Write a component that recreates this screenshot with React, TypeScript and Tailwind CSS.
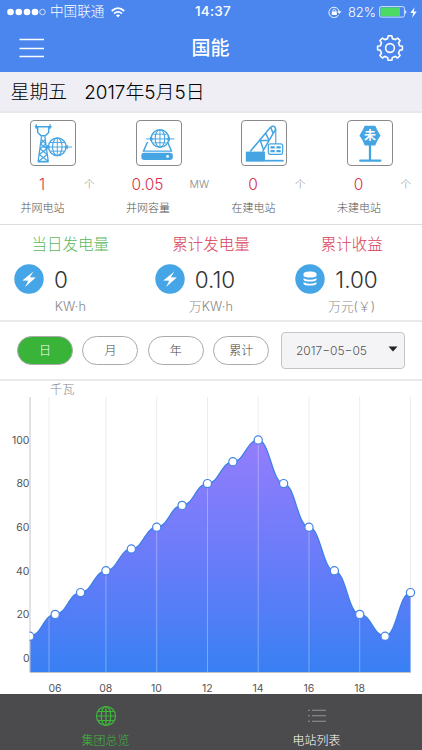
import React from 'react';

const TowerIcon = () => (
  <svg viewBox="0 0 46 46" className="w-full h-full" fill="none" stroke="#45a5e3" strokeWidth="1.5">
    <path d="M4 6H21.5M5.5 3.5V8M20 3.5V8M7 6V12L10.5 15.5H15L18.5 12V6" />
    <path d="M11 16L7.5 42M14.5 16L18 42M10.5 19L15.5 24L9.5 29L17 35L8 42M15 19L10 24L16.5 29L8.5 35L18 42" strokeWidth="1.3" />
    <path d="M7 42.5H18.5" strokeWidth="1.8" />
    <circle cx="27.5" cy="27" r="9.2" />
    <ellipse cx="27.5" cy="27" rx="5" ry="9.2" strokeWidth="1.2" />
    <path d="M20 22.5H35M20 31.5H35M12 27.2H43M27.5 18V36" strokeWidth="1" />
    <path d="M20.5 27.2L16.5 24.8V29.6ZM34.5 27.2L38.5 24.8V29.6Z" fill="#45a5e3" stroke="none" />
  </svg>
);

const CapacityIcon = () => (
  <svg viewBox="0 0 46 46" className="w-full h-full" fill="none" stroke="#45a5e3" strokeWidth="1.5">
    <circle cx="24" cy="18.3" r="9.2" />
    <ellipse cx="24" cy="18.3" rx="5" ry="9.2" strokeWidth="1.2" />
    <path d="M17 13.8H31M17 22.8H31M24 9V27.5M9.5 18.7H39" strokeWidth="1" />
    <path d="M17.5 18.7L13.5 16.2V21.2ZM30.5 18.7L34.5 16.2V21.2Z" fill="#45a5e3" stroke="none" />
    <path d="M11 22L6.8 31.5H36L32 22" />
    <rect x="4.5" y="33.2" width="33" height="7.6" rx="3.2" fill="#45a5e3" stroke="none" />
    <circle cx="32" cy="37" r="1.4" fill="white" stroke="none" />
  </svg>
);

const CraneIcon = () => (
  <svg viewBox="0 0 46 46" className="w-full h-full" fill="none" stroke="#45a5e3" strokeWidth="1.6">
    <path d="M8.5 32L29.5 6.8Q34 3.5 35.2 8.5L21.5 32M18 20.5H28.5M19 20L22.5 30M24.5 12.5L28.5 20.5M30 6.5L32.5 13" />
    <path d="M35.3 8V24" strokeWidth="1.2" />
    <rect x="4" y="32" width="20" height="10.5" fill="#45a5e3" stroke="none" />
    <path d="M24 41.5H43.5" strokeWidth="1.8" />
    <rect x="27.5" y="23.8" width="15" height="11" rx="2" strokeWidth="1.3" />
    <path d="M29.8 27.5H34.2M36 27.5H40.5M29.8 31.4H34.2M36 31.4H40.5" strokeWidth="2.4" />
  </svg>
);

const SignIcon = () => (
  <svg viewBox="0 0 46 46" className="w-full h-full">
    <path d="M17.5 5H28.5Q30 9 34 15.2Q30 21 28.5 25.5H17.5Q16 21 12 15.2Q16 9 17.5 5Z" fill="#45a5e3" />
    <path d="M23 25V41M12.8 41.5H33.8" stroke="#45a5e3" strokeWidth="2.4" strokeLinecap="round" />
    <text x="23" y="20" textAnchor="middle" fontSize="12.5" fontWeight="700" fill="white">未</text>
  </svg>
);

const BoltIcon = () => (
  <svg viewBox="0 0 30 30" className="w-[30px] h-[30px]">
    <circle cx="15" cy="15" r="14.7" fill="#45a5e6" />
    <path d="M19.5 7.5L8.3 16.4L14.2 16.8L11 23L21.8 13.6L15.8 13.2Z" fill="white" />
  </svg>
);

const CoinsIcon = () => (
  <svg viewBox="0 0 30 30" className="w-[30px] h-[30px]">
    <circle cx="15" cy="15" r="14.7" fill="#45a5e6" />
    <path d="M8.5 10C8.5 6.8 21.5 6.8 21.5 10V11.5C21.5 14.2 8.5 14.2 8.5 11.5Z" fill="white" />
    <path d="M8.5 14.2Q15 17.2 21.5 14.2V15.4C21.5 18.3 8.5 18.3 8.5 15.4Z" fill="white" />
    <path d="M8.5 18.2Q15 21.2 21.5 18.2V19.4C21.5 22.3 8.5 22.3 8.5 19.4Z" fill="white" />
  </svg>
);

const stations = [
  { icon: <TowerIcon />, value: '1', unit: '个', label: '并网电站' },
  { icon: <CapacityIcon />, value: '0.05', unit: 'MW', label: '并网容量' },
  { icon: <CraneIcon />, value: '0', unit: '个', label: '在建电站' },
  { icon: <SignIcon />, value: '0', unit: '个', label: '未建电站' }
];

const totals = [
  { icon: <BoltIcon />, title: '当日发电量', color: 'text-[#5cb85c]', value: '0', unit: 'KW·h' },
  { icon: <BoltIcon />, title: '累计发电量', color: 'text-[#d9405a]', value: '0.10', unit: '万KW·h' },
  { icon: <CoinsIcon />, title: '累计收益', color: 'text-[#d9405a]', value: '1.00', unit: '万元(￥)' }
];

const ranges = ['日', '月', '年', '累计'];

// hourly power from 05:00 to 20:00
const power = [10, 20, 30, 40, 50, 60, 70, 80, 90, 100, 80, 60, 40, 20, 10, 30];
const points = power.map((value, i) => ({ x: 29.8 + i * 25.38, y: 277 - value * 2.18 }));
const curve = points
  .map((p, i) => {
    if (i === 0) return `M${p.x} ${p.y}`;
    const prev = points[i - 1];
    return `C${prev.x + 11.5} ${prev.y} ${p.x - 11.5} ${p.y} ${p.x} ${p.y}`;
  })
  .join('');
const gridLines = [49, 105.9, 156.7, 207.5, 258.2, 309, 359.7, 410.5];

const PowerChart = () => (
  <svg viewBox="0 0 422 313" className="block w-full h-[313px]">
    <defs>
      <linearGradient id="area" x1="0" y1="59" x2="0" y2="291" gradientUnits="userSpaceOnUse">
        <stop offset="0" stopColor="#947dfc" />
        <stop offset="0.55" stopColor="#667cf9" />
        <stop offset="1" stopColor="#3880f3" />
      </linearGradient>
      <clipPath id="plot">
        <rect x="29.5" y="0" width="392" height="313" />
      </clipPath>
      <clipPath id="areaClip">
        <path d={`${curve}V291H29.8Z`} />
      </clipPath>
    </defs>
    <text x="50" y="12.5" fontSize="12.3" fontWeight="300" fill="#888">千瓦</text>
    {gridLines.map((x) => (
      <path key={x} d={`M${x} 16V291`} stroke="#ececec" />
    ))}
    <path d={`${curve}V291H29.8Z`} fill="url(#area)" />
    {gridLines.slice(0, 7).map((x) => (
      <path key={x} d={`M${x} 60V291`} stroke="white" strokeOpacity="0.32" clipPath="url(#areaClip)" />
    ))}
    <path d={curve} fill="none" stroke="#3f7fe6" strokeWidth="1.3" />
    <path d="M30 16V291.5H411" fill="none" stroke="#c4c4c8" />
    <g clipPath="url(#plot)">
      {points.map((p) => (
        <circle key={p.x} cx={p.x} cy={p.y} r="4.1" fill="white" stroke="#4584e6" strokeWidth="1.2" />
      ))}
    </g>
    <g fontSize="10.5" fill="#555">
      {[0, 20, 40, 60, 80, 100].map((v) => (
        <text key={v} x="29.5" y={280.7 - v * 2.18} textAnchor="end">{v}</text>
      ))}
      {['06', '08', '10', '12', '14', '16', '18'].map((h, i) => (
        <text key={h} x={55 + i * 50.77} y="310.5" textAnchor="middle">{h}</text>
      ))}
    </g>
  </svg>
);

const StatusBar = () => (
  <div className="flex items-center h-6 pl-[7px] pr-[5px] text-[13px] leading-none">
    <div className="flex-1 flex items-center">
      <svg viewBox="0 0 40 8" className="w-10 h-2" fill="white">
        {[3.5, 11.8, 20, 28].map((x) => (
          <circle key={x} cx={x} cy="4" r="3.3" />
        ))}
        <circle cx="35.5" cy="4" r="2.8" fill="none" stroke="white" strokeWidth="0.7" />
      </svg>
      <span className="ml-[3px] text-[13.6px] font-light">中国联通</span>
      <svg viewBox="0 0 14 11" className="ml-[7px] w-[14px] h-[11px]" fill="none" stroke="white" strokeWidth="1.7">
        <path d="M0.7 4Q7-1.6 13.3 4M3 6.6Q7 3.2 11 6.6" />
        <path d="M4.9 8.3Q7 6.8 9.1 8.3L7 10.5Z" fill="white" stroke="none" />
      </svg>
    </div>
    <span className="ml-[2px] text-[13.5px] font-medium tracking-[0.3px]">14:37</span>
    <div className="flex-1 flex items-center justify-end">
      <svg viewBox="0 0 14 12" className="w-[14px] h-3" fill="none" stroke="white" strokeWidth="0.9">
        <path d="M10.6 9A5.2 5.2 0 1 1 11.2 5.5" />
        <path d="M9.2 5.2H13.4L11.3 8Z" fill="white" stroke="none" />
        <rect x="3.8" y="5.4" width="5" height="3.6" fill="white" stroke="none" />
        <path d="M4.8 5.5V4.4Q6.3 1.8 7.8 4.4V5.5" />
      </svg>
      <span className="ml-[6px] font-light">82%</span>
      <svg viewBox="0 0 28 12" className="ml-[3px] w-7 h-3">
        <rect x="0.6" y="0.6" width="24.8" height="10.5" rx="1.6" fill="none" stroke="#cfe0ff" />
        <rect x="1.5" y="1.5" width="19.5" height="8.7" rx="0.6" fill="#4cd964" />
        <path d="M26.2 4Q28.5 6 26.2 8Z" fill="white" />
      </svg>
      <svg viewBox="0 0 7 11" className="ml-[3px] w-[7px] h-[11px]" fill="white">
        <path d="M4.6 0.3L0.3 6H3.1L2.2 10.7L6.7 4.6H3.8Z" />
      </svg>
    </div>
  </div>
);

const App = () => {
  return (
    <div className="flex flex-col w-[422px] h-[750px] overflow-hidden bg-white whitespace-nowrap font-['Inter','Noto_Sans_CJK_SC',sans-serif]">
      {/* Header */}
      <header className="h-[72px] bg-[#4a86ee] text-white">
        <StatusBar />
        <div className="flex items-center justify-between h-12 pl-[19px] pr-[18px]">
          <svg viewBox="0 0 26 20" className="w-[26px] h-5" stroke="white" strokeWidth="1.6">
            <path d="M0.5 1.5H25M0.5 10.5H25M0.5 18.5H25" />
          </svg>
          <h1 className="text-[19px] font-medium leading-none">国能</h1>
          <svg viewBox="0 0 28 28" className="w-7 h-7" fill="none" stroke="white" strokeWidth="1.6" strokeLinejoin="round">
            <path d="M12.2 1.8H15.8L16.4 4.6Q18 4.9 19.2 5.7L21.6 4.1L24.1 6.6L22.5 9Q23.3 10.3 23.6 11.8L26.4 12.3V15.8L23.6 16.4Q23.3 17.9 22.5 19.1L24.1 21.5L21.6 24L19.2 22.4Q18 23.2 16.4 23.5L15.8 26.3H12.2L11.6 23.5Q10.1 23.2 8.8 22.4L6.4 24L3.9 21.5L5.5 19.1Q4.7 17.9 4.4 16.4L1.6 15.8V12.3L4.4 11.8Q4.7 10.3 5.5 9L3.9 6.6L6.4 4.1L8.8 5.7Q10.1 4.9 11.6 4.6Z" />
            <circle cx="14" cy="14" r="4.4" />
          </svg>
        </div>
      </header>

      {/* Date */}
      <div className="flex items-center h-[41px] pt-[3px] pl-[10.5px] bg-[#efeef4] border-b-2 border-[#e7e7ec] text-[18.9px] font-light text-black">
        <span>星期五</span>
        <span className="ml-[17px]">2017年5月5日</span>
      </div>

      {/* Stations */}
      <div className="grid grid-cols-4 h-[112px] border-b border-[#dedede]">
        {stations.map((item) => (
          <div key={item.label} className="pt-[7px]">
            <div className="ml-[30px] w-[46px] h-[46px] border border-[#8a8a8a] rounded-[4px]">{item.icon}</div>
            <div className="flex items-center h-[22px] mt-[8px]">
              <span className="w-[84px] text-center text-[15.5px] font-light text-[#d9304a]">{item.value}</span>
              <span className="text-[10.5px] font-light text-[#888]">{item.unit}</span>
            </div>
            <p className="w-[85px] mt-[3px] text-center text-[11px] leading-[18px] font-light text-[#555]">{item.label}</p>
          </div>
        ))}
      </div>

      {/* Totals */}
      <div className="grid grid-cols-3 h-[97px] border-b-2 border-[#e9e9e9]">
        {totals.map((item) => (
          <div key={item.title} className="pt-[9px]">
            <h2 className={`text-center text-[15.5px] leading-[22px] font-light ${item.color}`}>{item.title}</h2>
            <div className="flex items-center h-[30px] mt-[8px] pl-[14px]">
              {item.icon}
              <span className="ml-[10px] pt-px text-[22.5px] font-light text-[#333]">{item.value}</span>
            </div>
            <p className="mt-[4px] text-center text-[12.7px] leading-[18px] font-light text-[#888]">{item.unit}</p>
          </div>
        ))}
      </div>

      {/* Range filter */}
      <div className="flex items-center h-[59px] pl-[17px] pr-[17px] border-b-2 border-[#e9e9e9]">
        <div className="flex gap-[9.4px]">
          {ranges.map((range, idx) => (
            <button
              key={range}
              className={`w-[56px] h-[29px] pt-[1px] rounded-full border border-[#aaa] text-[12px] font-light ${idx === 0 ? 'bg-[#39b338] text-white' : 'text-[#444]'}`}
            >
              {range}
            </button>
          ))}
        </div>
        <button className="flex items-center justify-between ml-auto w-[124px] h-[37px] pl-[14px] pr-[6px] rounded-[4px] border border-[#c4c4c8] bg-[#f4f4f7] text-[12px] font-light text-[#555]">
          2017−05−05
          <svg viewBox="0 0 10 6" className="w-[10px] h-[6px] mb-[3px]">
            <path d="M0.5 0.5H9.5L5 5.5Z" fill="#222" />
          </svg>
        </button>
      </div>

      <PowerChart />

      {/* Tab bar */}
      <nav className="grid grid-cols-2 h-[56px] bg-[#4b4b4d] text-[12px] leading-[16px]">
        <div className="flex flex-col items-center pt-[11px] text-[#3db83a]">
          <svg viewBox="0 0 22 22" className="w-[22px] h-[22px]" fill="none" stroke="currentColor" strokeWidth="1.2">
            <circle cx="11" cy="11" r="9.5" />
            <ellipse cx="11" cy="11" rx="4.8" ry="9.5" />
            <path d="M11 1.5V20.5M1.5 11H20.5M3 6.5H19M3 15.5H19" />
          </svg>
          <span className="mt-[6px] font-light">集团总览</span>
        </div>
        <div className="flex flex-col items-center pt-[11px] text-white">
          <svg viewBox="0 0 20 22" className="w-5 h-[22px]" stroke="#959597" strokeWidth="1.1">
            <path d="M1 5.2H3M5 5.2H19M1 10.7H3M5 10.7H19M1 16.3H3M5 16.3H19" />
          </svg>
          <span className="mt-[6px] font-light">电站列表</span>
        </div>
      </nav>
    </div>
  );
};

export default App;
